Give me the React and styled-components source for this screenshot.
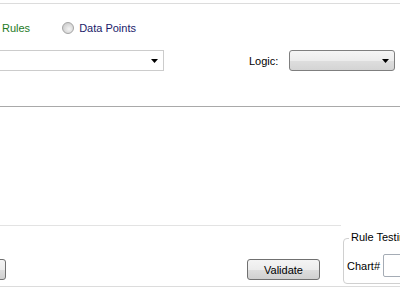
import styled, { createGlobalStyle } from 'styled-components'

const GlobalStyle = createGlobalStyle`
html, body {
  margin: 0;
  padding: 0;
  background: #ffffff;
}
body {
  font-family: "Liberation Sans", Arial, sans-serif;
  font-size: 11px;
  color: #000;
}
`;

const Window = styled.div`
width: 400px;
height: 291px;
overflow: hidden;
background: #ffffff;
display: flex;
flex-direction: column;
`;

const FilterPanel = styled.div`
margin-top: 3px;
height: 102px;
border-top: 1px solid #dcdcdc;
border-bottom: 1px solid #a9a9a9;
display: flex;
flex-direction: column;
`;

const RadioRow = styled.div`
display: flex;
align-items: center;
height: 14px;
margin-top: 17px;
padding-left: 2px;
`;

const RadioOption = styled.label`
display: flex;
align-items: center;
gap: 5px;
color: ${(props) => props.color};
margin-left: ${(props) => props.offset || 0}px;
`;

const RadioDot = styled.span`
width: 12px;
height: 12px;
border-radius: 50%;
border: 1px solid #a4a4a4;
background: radial-gradient(circle at 60% 60%, #f4f4f4 0%, #d8d8d8 55%, #c4c4c4 100%);
box-sizing: border-box;
display: inline-block;
`;

const SelectRow = styled.div`
display: flex;
align-items: center;
margin-top: 15px;
height: 21px;
`;

const Select = styled.div`
box-sizing: border-box;
flex-shrink: 0;
height: 21px;
width: ${(props) => props.width}px;
margin-left: ${(props) => props.offset || 0}px;
display: flex;
align-items: center;
justify-content: flex-end;
padding-right: 5px;
border: 1px solid ${(props) => (props.flat ? '#cccccc' : '#7f7f7f')};
border-radius: ${(props) => (props.flat ? 0 : 3)}px;
background: ${(props) =>
  props.flat ? '#ffffff' : 'linear-gradient(#f5f5f5, #ececec 50%, #dedede 51%, #d4d4d4)'};
`;

const FieldLabel = styled.span`
margin-left: ${(props) => props.offset || 0}px;
margin-right: ${(props) => props.gap || 0}px;
`;

const Arrow = () => (
  <svg width="7" height="4" viewBox="0 0 7 4">
    <path d="M0 0 H7 L3.5 4 Z" fill="#000" />
  </svg>
);

const Blank = styled.div`
height: 118px;
`;

const ActionPanel = styled.div`
display: flex;
height: 61px;
`;

const ActionPane = styled.div`
flex-shrink: 0;
width: 341px;
border-top: 1px solid #e3e3e3;
display: flex;
align-items: flex-start;
padding-top: 33px;
box-sizing: border-box;
`;

const Button = styled.button`
box-sizing: border-box;
flex-shrink: 0;
height: 21px;
width: ${(props) => props.width}px;
margin-left: ${(props) => props.offset || 0}px;
border: 1px solid #707070;
border-radius: 3px;
background: linear-gradient(#f4f4f4, #ececec 50%, #dedede 51%, #d0d0d0);
font-family: "Liberation Sans", Arial, sans-serif;
font-size: 11px;
color: #000;
padding: 0;
`;

const GroupBox = styled.div`
position: relative;
flex-shrink: 0;
box-sizing: border-box;
margin-top: 13px;
margin-left: 2px;
width: 110px;
height: 46px;
border: 1px solid #d0d0d0;
border-radius: 4px;
display: flex;
align-items: center;
padding-left: 3px;
padding-top: 9px;
`;

const Caption = styled.span`
position: absolute;
top: -8px;
left: 5px;
padding: 0 2px;
background: #ffffff;
font-size: 11px;
`;

const TextInput = styled.div`
box-sizing: border-box;
width: 60px;
height: 23px;
margin-left: 3px;
border: 1px solid #a5acb5;
border-radius: 2px;
background: #ffffff;
`;

const BottomRule = styled.div`
border-top: 1px solid #dcdcdc;
`;

export default function App() {
  return (
    <>
      <GlobalStyle />
      <Window>
        <FilterPanel>
          <RadioRow>
            <RadioOption color="#1e7a1e">Rules</RadioOption>
            <RadioOption color="#1a1a6a" offset={32}>
              <RadioDot />
              Data Points
            </RadioOption>
          </RadioRow>
          <SelectRow>
            <Select flat width={190} offset={-26}>
              <Arrow />
            </Select>
            <FieldLabel offset={85} gap={11}>Logic:</FieldLabel>
            <Select width={106}>
              <Arrow />
            </Select>
          </SelectRow>
        </FilterPanel>
        <Blank />
        <ActionPanel>
          <ActionPane>
            <Button width={60} offset={-54} />
            <Button width={73} offset={241}>Validate</Button>
          </ActionPane>
          <GroupBox>
            <Caption>Rule Testing</Caption>
            <span>Chart#</span>
            <TextInput />
          </GroupBox>
        </ActionPanel>
        <BottomRule />
      </Window>
    </>
  )
}
